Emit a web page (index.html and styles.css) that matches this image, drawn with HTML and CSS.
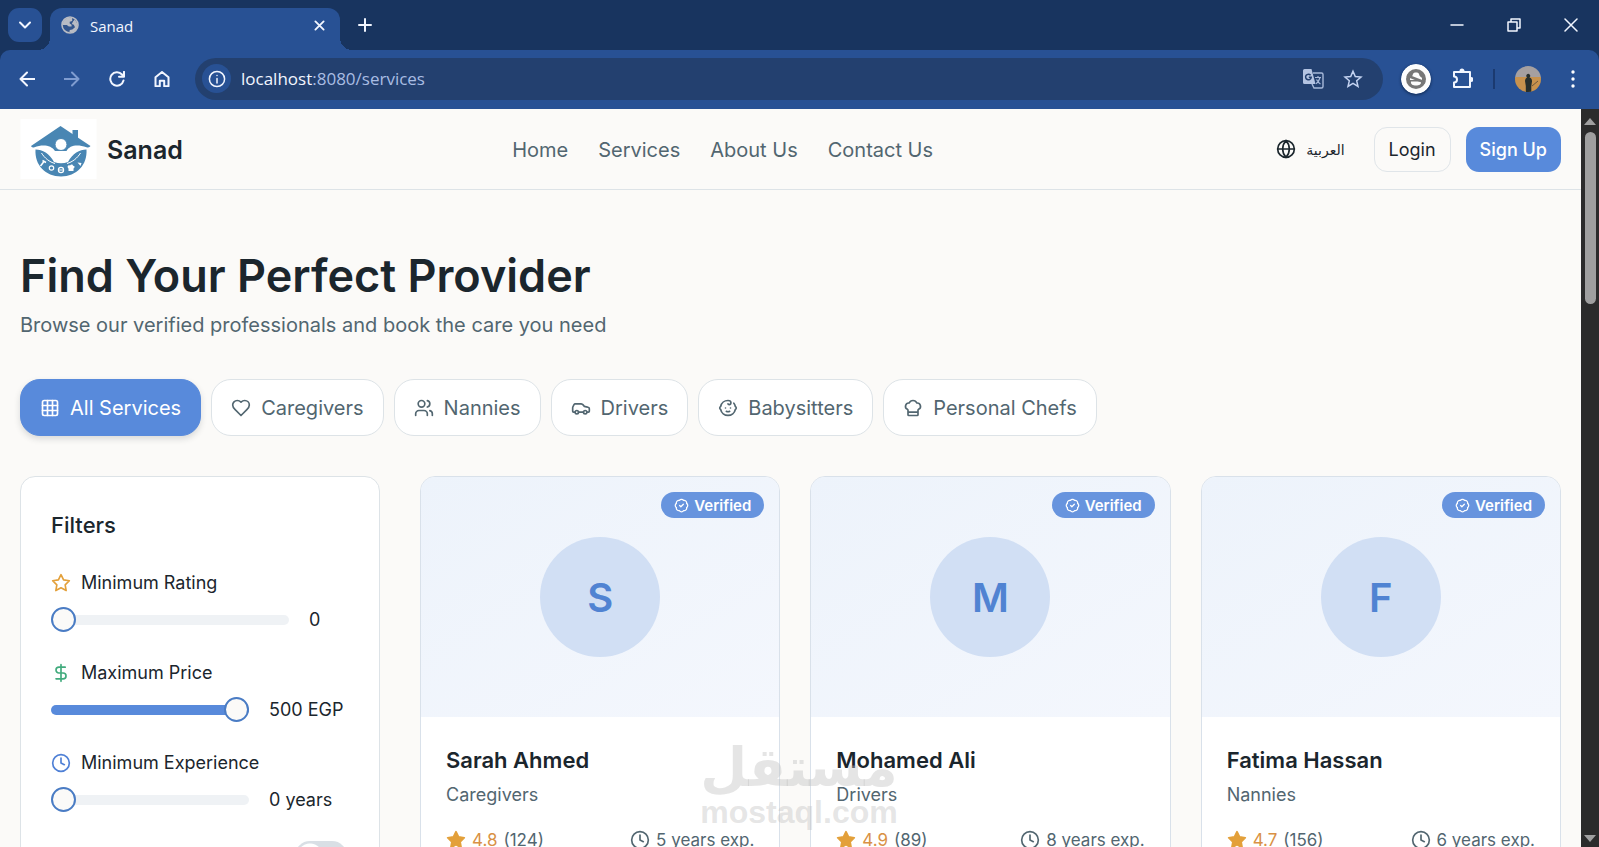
FILE: index.html
```
<!DOCTYPE html>
<html lang="en">
<head>
    <meta charset="UTF-8">
    <title>Sanad</title>

    <link rel="stylesheet" href="styles.css">
</head>
<body>

<!-- icon sprite -->
<svg class="sprite" aria-hidden="true">
    <symbol id="i-globe" viewBox="0 0 24 24"><circle cx="12" cy="12" r="10"/><path d="M12 2a14.500 14.500 0 0 0 0 20 14.500 14.500 0 0 0 0-20M2 12h20"/></symbol>
    <symbol id="i-grid" viewBox="0 0 24 24"><rect x="3" y="3" width="18" height="18" rx="2"/><path d="M3 9h18M3 15h18M9 3v18M15 3v18"/></symbol>
    <symbol id="i-heart" viewBox="0 0 24 24"><path d="M19 14c1.490-1.460 3-3.210 3-5.500A5.500 5.500 0 0 0 16.500 3c-1.760 0-3 .5-4.500 2-1.500-1.500-2.740-2-4.500-2A5.500 5.500 0 0 0 2 8.500c0 2.300 1.500 4.050 3 5.500l7 7Z"/></symbol>
    <symbol id="i-users" viewBox="0 0 24 24"><path d="M16 21v-2a4 4 0 0 0-4-4H6a4 4 0 0 0-4 4v2"/><circle cx="9" cy="7" r="4"/><path d="M22 21v-2a4 4 0 0 0-3-3.870M16 3.130a4 4 0 0 1 0 7.750"/></symbol>
    <symbol id="i-car" viewBox="0 0 24 24"><path d="M19 17h2c.6 0 1-.4 1-1v-3c0-.9-.7-1.700-1.500-1.900C18.700 10.600 16 10 16 10s-1.300-1.400-2.200-2.300c-.5-.4-1.100-.7-1.800-.7H5c-.6 0-1.100.4-1.400.9l-1.400 2.900A3.700 3.700 0 0 0 2 12v4c0 .6.4 1 1 1h2"/><circle cx="7" cy="17" r="2"/><path d="M9 17h6"/><circle cx="17" cy="17" r="2"/></symbol>
    <symbol id="i-baby" viewBox="0 0 24 24"><path d="M9 12h.01M15 12h.01M10 16c.5.3 1.200.5 2 .5s1.500-.2 2-.5"/><path d="M19 6.300a9 9 0 0 1 1.800 3.900 2 2 0 0 1 0 3.600 9 9 0 0 1-17.600 0 2 2 0 0 1 0-3.600A9 9 0 0 1 12 3c2 0 3.500 1.100 3.500 2.500s-.9 2.500-2 2.500c-.8 0-1.500-.4-1.500-1"/></symbol>
    <symbol id="i-chef" viewBox="0 0 24 24"><path d="M17 21a1 1 0 0 0 1-1v-5.350c0-.457.316-.844.727-1.041a4 4 0 0 0-2.134-7.589 5 5 0 0 0-9.186 0 4 4 0 0 0-2.134 7.588c.411.198.727.585.727 1.041V20a1 1 0 0 0 1 1ZM6 17h12"/></symbol>
    <symbol id="i-star" viewBox="0 0 24 24"><path d="M12 2l3.090 6.260L22 9.270l-5 4.870 1.180 6.880L12 17.770l-6.180 3.250L7 14.140 2 9.270l6.910-1.010L12 2z"/></symbol>
    <symbol id="i-dollar" viewBox="0 0 24 24"><path d="M12 2v20M17 5H9.500a3.500 3.500 0 0 0 0 7h5a3.500 3.500 0 0 1 0 7H6"/></symbol>
    <symbol id="i-clock" viewBox="0 0 24 24"><circle cx="12" cy="12" r="10"/><path d="M12 6v6l4 2"/></symbol>
    <symbol id="i-badge" viewBox="0 0 24 24"><path d="M3.850 8.620a4 4 0 0 1 4.780-4.770 4 4 0 0 1 6.740 0 4 4 0 0 1 4.780 4.780 4 4 0 0 1 0 6.740 4 4 0 0 1-4.770 4.780 4 4 0 0 1-6.750 0 4 4 0 0 1-4.780-4.770 4 4 0 0 1 0-6.760Z"/><path d="m9 12 2 2 4-4"/></symbol>
</svg>

<!-- browser window -->
<div class="tabstrip">
    <button class="tab-search" aria-label="Search tabs"><svg class="icon" viewBox="0 0 16 16"><path d="M3 5.500 8 10.500 13 5.500"/></svg></button>
    <div class="tab">
        <svg class="favicon" viewBox="0 0 18 18"><circle cx="9" cy="9" r="8" fill="#33558c" stroke="#b9bcc4" stroke-width="1.600"/><path d="M9 1.500C5 1.500 1.500 5 1.500 9h4.300l2 1.500h2.800V8.700L8.700 7.500V5.700l2.500-.8V2z" fill="#b9bcc4"/><path d="M12 5.500 10.800 8l2 .8 1.200 2.500-2.700 2.200-2.500.4-.5 2.400c5 .6 8.500-3 8.100-7.500-.3-2-1.300-3.900-2.900-5z" fill="#b9bcc4"/></svg>
        <span class="tab-title">Sanad</span>
        <button class="tab-close" aria-label="Close tab"><svg class="icon" viewBox="0 0 12 12"><path d="m1.500 1.500 9 9M10.500 1.500l-9 9"/></svg></button>
    </div>
    <button class="tab-new" aria-label="New tab"><svg class="icon" viewBox="0 0 14 14"><path d="M7 1v12M1 7h12"/></svg></button>
    <div class="window-controls">
        <button aria-label="Minimize"><svg class="icon" viewBox="0 0 14 14"><path d="M1 7h12"/></svg></button>
        <button aria-label="Restore"><svg class="icon" viewBox="0 0 14 14"><path d="M1 4h9v9H1zM4 4V1h9v9h-3"/></svg></button>
        <button aria-label="Close"><svg class="icon" viewBox="0 0 14 14"><path d="m1 1 12 12M13 1 1 13"/></svg></button>
    </div>
</div>

<div class="toolbar">
    <div class="toolbar-nav">
        <button aria-label="Back"><svg class="icon" viewBox="0 0 16 16"><path d="M15.500 8H1.500M8 1.500 1.500 8 8 14.500"/></svg></button>
        <button class="is-off" aria-label="Forward"><svg class="icon" viewBox="0 0 16 16"><path d="M.5 8h14M8 1.500 14.500 8 8 14.500"/></svg></button>
        <button aria-label="Reload"><svg class="icon" viewBox="0 0 16 16"><path d="M14.500 9.500A6.700 6.700 0 1 1 13 3.500L15 5.700M15 .8v5H10"/></svg></button>
        <button aria-label="Home page"><svg class="icon" viewBox="0 0 16 16"><path d="M1.500 6.300 8 1l6.500 5.300V15.200h-4.300V9.800H5.800v5.400H1.500z"/></svg></button>
    </div>
    <div class="omnibox">
        <button class="site-info" aria-label="Site information"><svg class="icon" viewBox="0 0 18 18"><circle cx="9" cy="9" r="7.600"/><path d="M9 8.500V13M9 5.400v.2"/></svg></button>
        <span class="url"><b>localhost</b>:8080/services</span>
        <button class="translate" aria-label="Translate"><svg viewBox="0 0 22 22"><path d="M11 5h8.500A1.500 1.500 0 0 1 21 6.500v12a1.500 1.500 0 0 1-1.500 1.500H12l-2-4" fill="none" stroke="#a7b9da" stroke-width="1.400"/><path d="M2.500 1h7l4 15h-11A1.500 1.500 0 0 1 1 14.500v-12A1.500 1.500 0 0 1 2.500 1z" fill="#b4c4e2"/><path d="M13 9.500h6M16 8v1.500M18 9.500c-.7 3-2.300 5-4 6.200M14.500 11.500c1 1.800 2.200 3.500 4 4.500" fill="none" stroke="#a7b9da" stroke-width="1.200"/><path d="M8.600 7.200A2.800 2.800 0 1 0 9.200 9.300H6.800" fill="none" stroke="#23406f" stroke-width="1.500"/></svg></button>
        <button class="bookmark" aria-label="Bookmark"><svg class="icon" viewBox="0 0 20 20"><path d="m10 2.200 2.300 5.300 5.700.5-4.300 3.800 1.300 5.600-5-3-5 3 1.300-5.600L2 8l5.700-.5z"/></svg></button>
    </div>
    <div class="toolbar-tools">
        <button class="ext" aria-label="Extension"><svg viewBox="0 0 30 30"><circle cx="15" cy="15" r="15" fill="#fdfdfd"/><circle cx="15" cy="15" r="10" fill="#777"/><path d="M9 14c1-1 2-1.300 2.500-2.500.6-2.500 1.500-3.500 3.500-3 2-.5 3 .5 3.500 3 .5 1.200 1.500 1.500 2.500 2.500v2H9zM10 17.500h10c.5 3-2 4-5 4s-5.500-1-5-4z" fill="#fdfdfd"/><path d="m6 11.500 18 7" stroke="#777" stroke-width="2.500"/></svg></button>
        <button class="puzzle" aria-label="Extensions"><svg class="icon" viewBox="0 0 22 22"><path d="M3 4h16v15H3v-4.500a3 3 0 0 0 0-6z"/><path d="M9.500 3a1.500 1.500 0 0 1 3 0zM20 10a1.500 1.500 0 0 1 0 3z" fill="currentColor"/></svg></button>
        <span class="tool-divider"></span>
        <button class="profile" aria-label="Profile"><svg viewBox="0 0 26 26"><clipPath id="face"><circle cx="13" cy="13" r="13"/></clipPath><g clip-path="url(#face)"><path d="M0 0h26v12H0z" fill="#a6a0a0"/><path d="M0 11h26v15H0z" fill="#c8924d"/><path d="M10 15c0-2 1-3 2-3.500a2 2 0 1 1 2.500 0c2 .5 2.500 2 2.500 4l-.7 4.500v6h-5.500v-6z" fill="#272f2d"/><path d="m17 20 6-5" stroke="#6b573d"/></g></svg></button>
        <button class="menu" aria-label="Menu"><svg viewBox="0 0 6 18"><g fill="#fff"><circle cx="3" cy="2" r="1.700"/><circle cx="3" cy="9" r="1.700"/><circle cx="3" cy="16" r="1.700"/></g></svg></button>
    </div>
</div>

<div class="viewport">
    <div class="page">

        <header class="site-header">
            <a class="brand" href="#">
                <svg class="brand-logo" viewBox="0 0 76 60" aria-hidden="true">
                    <path d="M0 0h76v60H0z" fill="#fff"/>
                    <g fill="#4986b3">
                        <path d="M40 7 70 27q-1 2-4 1.200C57 25 49 26 46 32H34.500C31 26 22 25 14 28.200Q11 29 10.500 27z"/>
                        <path d="M52 11h5.500v9L52 16z"/>
                        <!-- bowl with the four service marks -->
                        <path d="M15 30.500c7 0 14 4 18.500 12.500q7 2.500 14 0C52 34.500 59 30.500 66 30.500 67 46 56 57.500 40.500 57.500S14 46 15 30.500z"/>
                    </g>
                    <circle cx="40.500" cy="25.500" r="6" fill="#fff" stroke="#4986b3"/>
                    <path d="M21 34c3 5 8 9 13.500 10.500M60 34c-3 5-8 9-13.500 10.500" fill="none" stroke="#fff"/>
                    <path d="m20 47 3.500-4.500M22 41.500l3.500 2" fill="none" stroke="#fff" stroke-width="1.500"/>
                    <circle cx="31" cy="49" r="2.200" fill="none" stroke="#fff" stroke-width="1.200"/>
                    <circle cx="40.500" cy="51" r="2.600" fill="none" stroke="#fff" stroke-width="1.200"/>
                    <path d="M48 52v-2.500c-2-2 0-4 1.500-3 1-1.500 3-1 3 .3 2 0 2 2 .5 2.700V52zM57 43.500l3 3.500 1-3z" fill="#fff"/>
                    <path d="M38 51h5" stroke="#fff"/>
                </svg>
                <span class="brand-name">Sanad</span>
            </a>
            <nav class="site-nav">
                <a href="#">Home</a>
                <a href="#">Services</a>
                <a href="#">About Us</a>
                <a href="#">Contact Us</a>
            </nav>
            <div class="site-actions">
                <button class="btn btn-lang"><svg class="icon"><use href="#i-globe"/></svg><span lang="ar">العربية</span></button>
                <button class="btn btn-outline">Login</button>
                <button class="btn btn-primary">Sign Up</button>
            </div>
        </header>

        <main class="content">
            <h1>Find Your Perfect Provider</h1>
            <p class="lead">Browse our verified professionals and book the care you need</p>

            <div class="categories">
                <button class="chip is-active"><svg class="icon"><use href="#i-grid"/></svg>All Services</button>
                <button class="chip"><svg class="icon"><use href="#i-heart"/></svg>Caregivers</button>
                <button class="chip"><svg class="icon"><use href="#i-users"/></svg>Nannies</button>
                <button class="chip"><svg class="icon"><use href="#i-car"/></svg>Drivers</button>
                <button class="chip"><svg class="icon"><use href="#i-baby"/></svg>Babysitters</button>
                <button class="chip"><svg class="icon"><use href="#i-chef"/></svg>Personal Chefs</button>
            </div>

            <div class="layout">
                <aside class="filters">
                    <h2>Filters</h2>

                    <div class="filter">
                        <label for="rating"><svg class="icon c-gold"><use href="#i-star"/></svg>Minimum Rating</label>
                        <div class="filter-row">
                            <input type="range" id="rating" min="0" max="5" value="0" style="--fill: 0%">
                            <output class="short" for="rating">0</output>
                        </div>
                    </div>

                    <div class="filter">
                        <label for="price"><svg class="icon c-green"><use href="#i-dollar"/></svg>Maximum Price</label>
                        <div class="filter-row">
                            <input type="range" id="price" min="0" max="500" value="500" style="--fill: 100%">
                            <output for="price">500 EGP</output>
                        </div>
                    </div>

                    <div class="filter">
                        <label for="experience"><svg class="icon c-blue"><use href="#i-clock"/></svg>Minimum Experience</label>
                        <div class="filter-row">
                            <input type="range" id="experience" min="0" max="20" value="0" style="--fill: 0%">
                            <output for="experience">0 years</output>
                        </div>
                    </div>

                    <div class="filter-toggle">
                        <input type="checkbox" class="switch" id="toggle" role="switch">
                    </div>
                </aside>

                <section class="providers">
                    <article class="card">
                        <div class="card-cover">
                            <span class="verified"><svg class="icon"><use href="#i-badge"/></svg>Verified</span>
                            <span class="avatar">S</span>
                        </div>
                        <div class="card-body">
                            <h3>Sarah Ahmed</h3>
                            <p class="role">Caregivers</p>
                            <div class="stats">
                                <span><svg class="icon star"><use href="#i-star"/></svg><span class="score">4.8</span> (124)</span>
                                <span class="exp"><svg class="icon"><use href="#i-clock"/></svg>5 years exp.</span>
                            </div>
                        </div>
                    </article>

                    <article class="card">
                        <div class="card-cover">
                            <span class="verified"><svg class="icon"><use href="#i-badge"/></svg>Verified</span>
                            <span class="avatar">M</span>
                        </div>
                        <div class="card-body">
                            <h3>Mohamed Ali</h3>
                            <p class="role">Drivers</p>
                            <div class="stats">
                                <span><svg class="icon star"><use href="#i-star"/></svg><span class="score">4.9</span> (89)</span>
                                <span class="exp"><svg class="icon"><use href="#i-clock"/></svg>8 years exp.</span>
                            </div>
                        </div>
                    </article>

                    <article class="card">
                        <div class="card-cover">
                            <span class="verified"><svg class="icon"><use href="#i-badge"/></svg>Verified</span>
                            <span class="avatar">F</span>
                        </div>
                        <div class="card-body">
                            <h3>Fatima Hassan</h3>
                            <p class="role">Nannies</p>
                            <div class="stats">
                                <span><svg class="icon star"><use href="#i-star"/></svg><span class="score">4.7</span> (156)</span>
                                <span class="exp"><svg class="icon"><use href="#i-clock"/></svg>6 years exp.</span>
                            </div>
                        </div>
                    </article>
                </section>
            </div>
        </main>
    </div>

    <div class="scrollbar">
        <svg viewBox="0 0 18 18"><path d="m9 6 6 7H3z" fill="#a0a0a0"/></svg>
        <div class="scroll-thumb"></div>
        <svg viewBox="0 0 18 18"><path d="m9 13 6-7H3z" fill="#a0a0a0"/></svg>
    </div>
</div>

<div class="watermark">
    <span class="watermark-ar" lang="ar">مستقل</span>
    <span class="watermark-en">mostaql.com</span>
</div>

</body>
</html>
```
FILE: styles.css
```
* {
    box-sizing: border-box;
    margin: 0;
    padding: 0;
}

body {
    height: 100vh;
    display: flex;
    flex-direction: column;
    overflow: hidden;
    background: #18345f;
    color: #1b262d;
    font-family: Inter, "DejaVu Sans", sans-serif;
}

button {
    border: 0;
    background: none;
    font: inherit;
    color: inherit;
}

a {
    color: inherit;
    text-decoration: none;
}

.sprite {
    position: absolute;
    width: 0;
    height: 0;
}

.icon {
    flex: none;
    width: 20px;
    height: 20px;
    fill: none;
    stroke: currentColor;
    stroke-width: 2;
    stroke-linecap: round;
    stroke-linejoin: round;
}

/* browser window */

.tabstrip {
    flex: none;
    display: flex;
    align-items: flex-start;
    height: 50px;
    padding: 8px 0 0 8px;
    color: #f2f6ff;
}

.tab-search {
    display: grid;
    place-items: center;
    width: 34px;
    height: 34px;
    border-radius: 11px;
    background: #285194;
}

.tab-search .icon {
    width: 16px;
    height: 16px;
}

.tab {
    position: relative;
    display: flex;
    align-items: center;
    gap: 11px;
    width: 290px;
    height: 42px;
    margin-left: 8px;
    padding: 0 15px 8px 11px;
    border-radius: 12px 12px 0 0;
    background: #285194;
}

/* curved feet of the active tab */
.tab::before,
.tab::after {
    content: "";
    position: absolute;
    bottom: 0;
    width: 12px;
    height: 12px;
}

.tab::before {
    left: -12px;
    background: radial-gradient(circle at 0 0, transparent 12px, #285194 12px);
}

.tab::after {
    right: -12px;
    background: radial-gradient(circle at 100% 0, transparent 12px, #285194 12px);
}

.favicon {
    width: 18px;
    height: 18px;
}

.tab-title {
    flex: 1;
    padding-top: 2px;
    font: 15px/20px "Open Sans", "Noto Sans", sans-serif;
}

.tab-close,
.tab-close .icon {
    display: block;
    width: 11px;
    height: 11px;
}

.tab-new {
    margin: 10px 0 0 18px;
}

.tab-new .icon {
    display: block;
    width: 14px;
    height: 14px;
}

.window-controls {
    display: flex;
    margin-left: auto;
}

.window-controls button {
    display: grid;
    place-items: center;
    width: 57px;
    height: 34px;
}

.window-controls .icon {
    width: 14px;
    height: 14px;
    stroke-width: 1.500;
}

.toolbar {
    flex: none;
    display: flex;
    align-items: center;
    height: 59px;
    padding: 0 23px 2px 19px;
    border-radius: 10px 10px 0 0;
    background: #285194;
    color: #f2f6ff;
}

.toolbar-nav {
    display: flex;
    gap: 29px;
}

.toolbar-nav button,
.toolbar-nav .icon {
    display: block;
    width: 16px;
    height: 16px;
}

.toolbar-nav .is-off {
    color: #7f9cd0;
}

.omnibox {
    flex: 1;
    display: flex;
    align-items: center;
    height: 42px;
    margin: 0 18px 0 25px;
    padding: 0 20px 0 7px;
    border-radius: 21px;
    background: #23406f;
}

.site-info {
    display: grid;
    place-items: center;
    width: 29px;
    height: 29px;
    border-radius: 50%;
    background: #285194;
}

.site-info .icon {
    width: 18px;
    height: 18px;
    stroke-width: 1.500;
}

.url {
    flex: 1;
    margin-left: 10px;
    color: #a9bde3;
    font: 17px/24px "Open Sans", "Noto Sans", sans-serif;
}

.url b {
    color: #f2f6ff;
    font-weight: 400;
}

.translate svg {
    display: block;
    width: 22px;
    height: 22px;
}

.bookmark {
    margin-left: 19px;
    color: #c4d3f1;
}

.bookmark .icon {
    display: block;
    stroke-width: 1.500;
    stroke-linejoin: miter;
}

.toolbar-tools {
    display: flex;
    align-items: center;
}

.ext svg {
    display: block;
    width: 30px;
    height: 30px;
    border-radius: 50%;
    box-shadow: 0 1px 3px #10284e;
}

.puzzle {
    margin-left: 20px;
}

.puzzle .icon {
    display: block;
    width: 22px;
    height: 22px;
}

.tool-divider {
    width: 2px;
    height: 20px;
    margin: 0 20px 0 20px;
    background: #1b3a70;
}

.profile svg {
    display: block;
    width: 26px;
    height: 26px;
}

.menu {
    margin-left: 29px;
}

.menu svg {
    display: block;
    width: 6px;
    height: 18px;
}

/* page */

.viewport {
    flex: 1;
    display: flex;
    min-height: 0;
}

.page {
    flex: 1;
    overflow: hidden;
    background: #fbfaf8;
}

.scrollbar {
    flex: none;
    display: flex;
    flex-direction: column;
    width: 18px;
    padding-top: 3px;
    background: #2b2b2b;
}

.scrollbar svg {
    width: 18px;
    height: 18px;
}

.scroll-thumb {
    flex: none;
    width: 11px;
    height: 172px;
    margin: 2px auto auto 4px;
    border-radius: 6px;
    background: #9f9f9f;
}

.site-header {
    display: flex;
    align-items: center;
    justify-content: space-between;
    height: 81px;
    padding: 0 20px;
    border-bottom: 1px solid #dde3e7;
}

.brand {
    display: flex;
    align-items: center;
    gap: 10px;
}

.brand-logo {
    width: 77px;
    height: 60px;
}

.brand-name {
    padding-top: 2px;
    font-size: 25px;
    font-weight: 600;
}

.site-nav {
    display: flex;
    gap: 30px;
    padding-top: 2px;
    color: #526670;
    font-size: 20px;
}

.site-actions {
    display: flex;
    gap: 15px;
}

.btn {
    display: flex;
    align-items: center;
    height: 45px;
    padding: 0 14px;
    border-radius: 13px;
    font-size: 18px;
}

.btn-lang {
    gap: 10px;
    font-size: 14px;
}

.btn-outline {
    border: 1px solid #e0e5e9;
}

.btn-primary {
    background: #588adb;
    color: #fff;
    font-weight: 500;
}

.content {
    padding: 60px 20px 0;
}

h1 {
    font-size: 45px;
    line-height: 52px;
    font-weight: 600;
}

.lead {
    margin-top: 9px;
    color: #526670;
    font-size: 20px;
    line-height: 28px;
}

.categories {
    display: flex;
    gap: 10px;
    margin-top: 40px;
}

.chip {
    display: flex;
    align-items: center;
    gap: 10px;
    height: 57px;
    padding: 0 19px;
    border: 1px solid #dde3e7;
    border-radius: 20px;
    background: #fff;
    color: #526670;
    font-size: 20px;
}

.chip.is-active {
    border-color: #588adb;
    background: #588adb;
    color: #fff;
    box-shadow: 0 3px 6px #1b262d26;
}

.layout {
    display: flex;
    align-items: flex-start;
    gap: 40px;
    margin-top: 40px;
}

.filters {
    flex: none;
    width: 360px;
    padding: 30px;
    border: 1px solid #dde3e7;
    border-radius: 15px;
    background: #fff;
}

.filters h2 {
    margin: 3px 0 27px;
    font-size: 22px;
    line-height: 30px;
    font-weight: 500;
}

.filter {
    height: 90px;
    padding-top: 4px;
}

.filter label {
    display: flex;
    align-items: center;
    gap: 10px;
    font-size: 18px;
    line-height: 24px;
}

.filter-row {
    display: flex;
    align-items: center;
    gap: 20px;
    margin-top: 12px;
}

.filter-row output {
    width: 80px;
    font-size: 18px;
    line-height: 26px;
}

.filter-row output.short {
    width: 40px;
}

.filter input[type=range] {
    -webkit-appearance: none;
    appearance: none;
    flex: 1;
    min-width: 0;
    height: 26px;
    background: none;
}

.filter input::-webkit-slider-runnable-track {
    height: 10px;
    border-radius: 5px;
    background: linear-gradient(90deg, #588adb var(--fill), #eff2f5 var(--fill));
}

.filter input::-webkit-slider-thumb {
    -webkit-appearance: none;
    width: 25px;
    height: 25px;
    margin-top: -8px;
    border: 2px solid #4a7cc4;
    border-radius: 50%;
    background: #fbfaf8;
}

.filter-toggle {
    display: flex;
    justify-content: flex-end;
    padding: 4px 2px 0 0;
}

.switch {
    appearance: none;
    width: 52px;
    height: 30px;
    border-radius: 15px;
    background: radial-gradient(circle at 15px 15px, #fff 12px, transparent 13px) #d9dfe5;
}

.c-gold {
    color: #e3a03a;
}

.c-green {
    color: #41ab7d;
}

.c-blue {
    color: #4f80d6;
}

.providers {
    flex: 1;
    display: grid;
    grid-template-columns: repeat(3, 1fr);
    gap: 30px;
}

.card {
    overflow: hidden;
    border: 1px solid #d9e1ea;
    border-radius: 15px;
    background: #fff;
}

.card-cover {
    position: relative;
    display: grid;
    place-items: center;
    height: 240px;
    background: linear-gradient(150deg, #edf3fb, #f4f7fd);
}

.avatar {
    display: grid;
    place-items: center;
    width: 120px;
    height: 120px;
    border-radius: 50%;
    background: #d1dff4;
    color: #5083d2;
    font-size: 40px;
    font-weight: 600;
}

.verified {
    position: absolute;
    top: 15px;
    right: 15px;
    display: flex;
    align-items: center;
    gap: 5px;
    height: 26px;
    padding: 0 13px;
    border-radius: 13px;
    background: #6794de;
    color: #fff;
    font-size: 15px;
    font-weight: 600;
}

.verified .icon {
    width: 15px;
    height: 15px;
}

.card-body {
    padding: 25px 25px 40px;
}

.card h3 {
    margin-top: 3px;
    font-size: 22px;
    line-height: 30px;
    font-weight: 600;
}

.role {
    margin-top: 8px;
    color: #526670;
    font-size: 18px;
    line-height: 24px;
}

.stats {
    display: flex;
    justify-content: space-between;
    margin-top: 21px;
    color: #526670;
    font-size: 17px;
    line-height: 24px;
}

.stats > span {
    display: flex;
    align-items: center;
    gap: 6px;
}

.star {
    color: #e3a03a;
    fill: currentColor;
}

.score {
    color: #d99145;
}

/* lies over the whole page */
.watermark {
    position: absolute;
    left: 703px;
    top: 740px;
    display: flex;
    flex-direction: column;
    align-items: center;
    width: 192px;
    color: #bebebe66;
    pointer-events: none;
}

.watermark-ar {
    font: 700 54px/56px "DejaVu Sans", sans-serif;
}

.watermark-en {
    font: 700 32px/32px "Liberation Sans", sans-serif;
}
```
